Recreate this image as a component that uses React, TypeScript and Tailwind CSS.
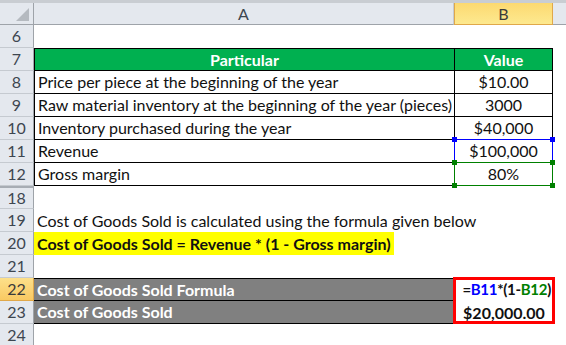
const font = { fontFamily: '"Lato", "Open Sans", sans-serif' };

type Row = {
  n: string;
  kind: 'blank' | 'head' | 'data' | 'text' | 'yellow' | 'gray';
  a?: string;
  b?: React.ReactNode;
  active?: boolean;
  thickTop?: boolean;
  first?: boolean;
  bBorder?: string;
};

const rows: Row[] = [
  { n: '6', kind: 'blank' },
  { n: '7', kind: 'head', a: 'Particular', b: 'Value' },
  { n: '8', kind: 'data', a: 'Price per piece at the beginning of the year', b: '$10.00' },
  { n: '9', kind: 'data', a: 'Raw material inventory at the beginning of the year (pieces)', b: '3000' },
  { n: '10', kind: 'data', a: 'Inventory purchased during the year', b: '$40,000' },
  { n: '11', kind: 'data', a: 'Revenue', b: '$100,000', bBorder: 'blue' },
  { n: '12', kind: 'data', a: 'Gross margin', b: '80%', bBorder: 'green' },
  { n: '18', kind: 'blank', thickTop: true },
  { n: '19', kind: 'text', a: 'Cost of Goods Sold is calculated using the formula given below' },
  { n: '20', kind: 'yellow', a: 'Cost of Goods Sold = Revenue * (1 - Gross margin)' },
  { n: '21', kind: 'blank' },
  {
    n: '22',
    kind: 'gray',
    a: 'Cost of Goods Sold Formula',
    active: true,
    first: true,
    b: (
      <span className="whitespace-nowrap text-[15px] tracking-[-0.3px]">
        =<span className="text-[#0000ff]">B11</span>*(1-<span className="text-[#008000]">B12</span>)
      </span>
    ),
  },
  { n: '23', kind: 'gray', a: 'Cost of Goods Sold', b: '$20,000.00' },
  { n: '24', kind: 'blank' },
];

function Handles({ color }: { color: string }) {
  const c = color === 'blue' ? 'bg-[#0000ff]' : 'bg-[#008000]';
  return (
    <>
      <span className={`absolute -left-[3px] -top-[3px] h-[5px] w-[5px] ${c}`} />
      <span className={`absolute -right-[3px] -top-[3px] h-[5px] w-[5px] ${c}`} />
      <span className={`absolute -bottom-[3px] -left-[3px] h-[5px] w-[5px] ${c}`} />
      <span className={`absolute -bottom-[3px] -right-[3px] h-[5px] w-[5px] ${c}`} />
    </>
  );
}

function RowHeader({ n, active, thickTop }: { n: string; active?: boolean; thickTop?: boolean }) {
  return (
    <div
      className={`flex h-full w-[34px] shrink-0 items-center justify-center border-r border-b text-[16px] ${
        active
          ? 'border-[#e0a84a] bg-gradient-to-b from-[#fde08a] to-[#f9c962] text-[#3b3b3b]'
          : 'border-r-[#9ea3a9] border-b-[#c5cad0] bg-[#e4e8ee] text-[#3d4650]'
      } ${thickTop ? 'border-t-2 border-t-[#a7adb4]' : ''}`}
    >
      {n}
    </div>
  );
}

function SheetRow({ r }: { r: Row }) {
  const aCls =
    r.kind === 'head'
      ? 'bg-[#00b050] text-white font-bold justify-center border-l border-y border-black'
      : r.kind === 'data'
        ? 'border-l border-b border-black pl-[3px]'
        : r.kind === 'gray'
          ? `bg-[#808080] text-white font-bold pl-[3px] border-b border-black ${r.first ? 'border-t' : ''}`
          : 'pl-[3px]';
  const bCls =
    r.kind === 'head'
      ? 'bg-[#00b050] text-white font-bold border border-black'
      : r.kind === 'data'
        ? 'border-x border-b border-black justify-center'
        : r.kind === 'gray'
          ? `font-bold border-l border-black bg-white ${r.first ? 'justify-end pr-[2px]' : 'justify-center'}`
          : '';

  return (
    <div className="flex h-[23px]">
      <RowHeader n={r.n} active={r.active} thickTop={r.thickTop} />
      <div
        className={`flex w-[420px] shrink-0 items-center overflow-visible whitespace-nowrap text-[16px] text-[#111] ${aCls}`}
      >
        {r.kind === 'yellow' ? (
          <span className="-ml-[3px] flex h-full items-center bg-[#ffff00] pl-[3px] pr-[3px] font-bold">{r.a}</span>
        ) : (
          r.a
        )}
      </div>
      <div
        className={`relative flex w-[99px] shrink-0 items-center justify-center whitespace-nowrap text-[16px] text-[#111] ${bCls}`}
      >
        {r.bBorder === 'blue' && (
          <div className="pointer-events-none absolute -inset-px border border-[#0000ff]">
            <Handles color="blue" />
          </div>
        )}
        {r.bBorder === 'green' && (
          <div className="pointer-events-none absolute -inset-px border border-[#008000]">
            <Handles color="green" />
          </div>
        )}
        {r.b}
      </div>
      <div className="flex-1" />
    </div>
  );
}

export default function App() {
  return (
    <div className="h-[345px] w-[566px] overflow-hidden bg-white" style={font}>
      {/* column headers */}
      <div className="flex h-[25px] border-t-[3px] border-t-[#c9cdd2] bg-[#e4e8ee]">
        <div className="relative w-[34px] shrink-0 border-r border-b border-[#9ea3a9]">
          <div className="absolute bottom-[3px] right-[4px] h-0 w-0 border-b-[13px] border-l-[13px] border-b-[#b5bac0] border-l-transparent" />
        </div>
        <div className="flex w-[420px] shrink-0 items-center justify-center border-r border-b border-r-[#c5cad0] border-b-[#9ea3a9] text-[16px] text-[#3d4650]">
          A
        </div>
        <div className="flex w-[99px] shrink-0 items-center justify-center border border-t-0 border-[#e0a84a] bg-gradient-to-b from-[#fcd970] to-[#fde98f] text-[16px] text-[#3b3b3b]">
          B
        </div>
        <div className="flex-1 border-b border-[#9ea3a9]" />
      </div>

      <div className="relative">
        {rows.map((r) => (
          <SheetRow key={r.n} r={r} />
        ))}
        {/* red highlight around result cells */}
        <div className="pointer-events-none absolute left-[453px] top-[252px] h-[47px] w-[102px] border-[3px] border-[#ff0000]" />
      </div>
    </div>
  );
}
